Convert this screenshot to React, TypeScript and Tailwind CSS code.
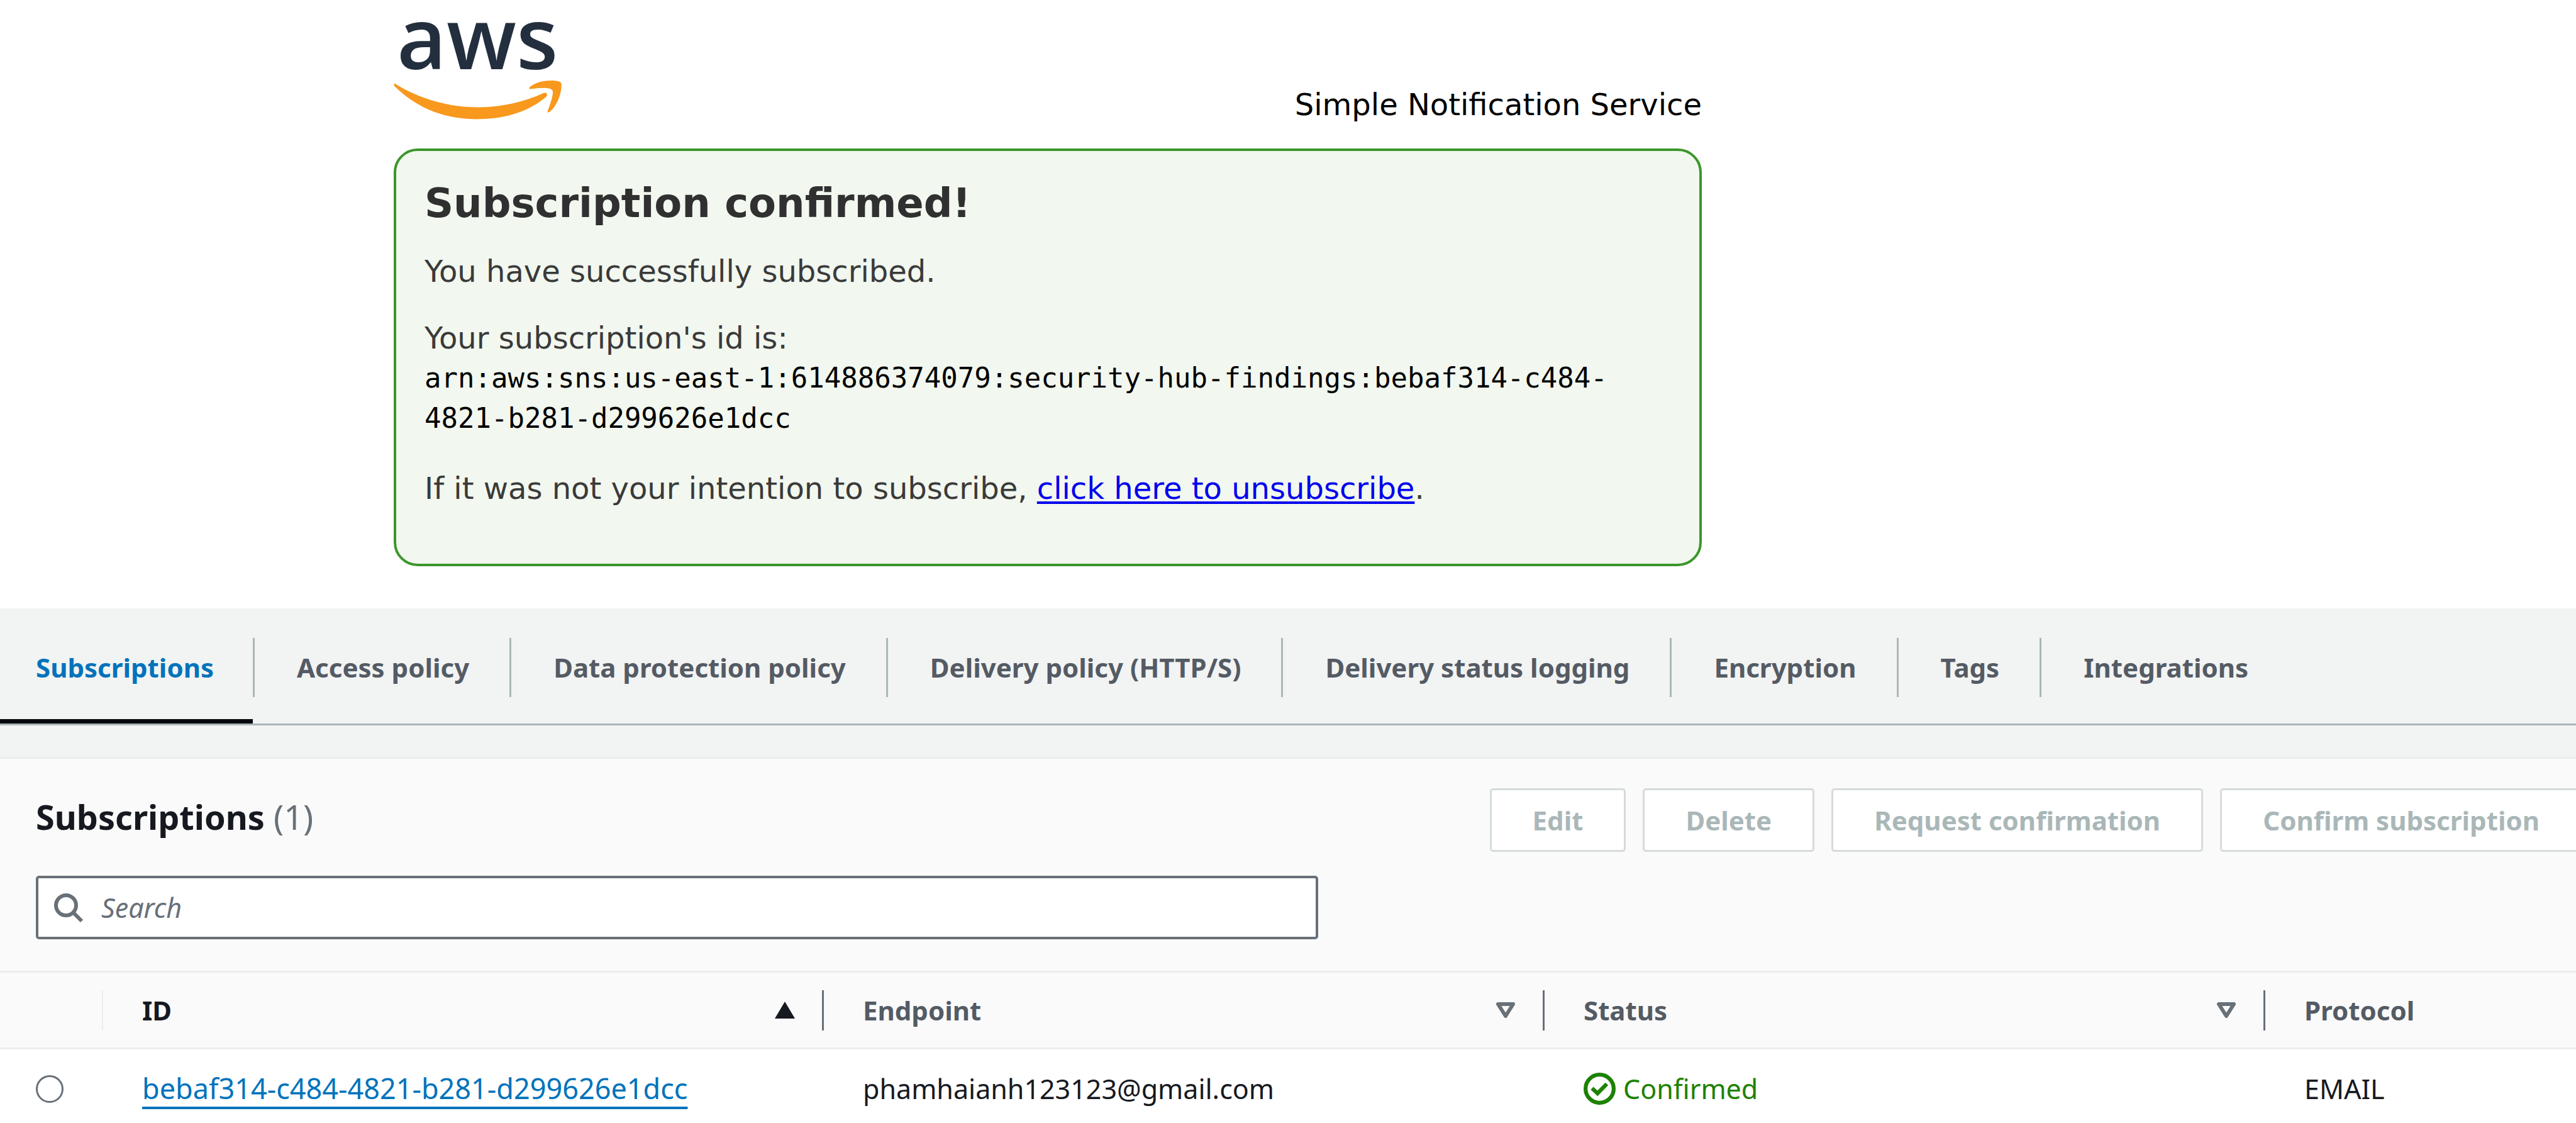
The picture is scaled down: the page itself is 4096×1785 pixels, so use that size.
import React, { useState } from "react";

const TABS = [
  "Subscriptions",
  "Access policy",
  "Data protection policy",
  "Delivery policy (HTTP/S)",
  "Delivery status logging",
  "Encryption",
  "Tags",
  "Integrations",
];

const ACTIONS = ["Edit", "Delete", "Request confirmation", "Confirm subscription"];

function AwsLogo() {
  return (
    <svg role="img" aria-label="aws" viewBox="0 0 858 550" className="mb-2 h-[171px] w-[267px] overflow-visible">
      <text x="16" y="293" fontSize="438" className="fill-[#232f3e] font-['Open_Sans',sans-serif] font-semibold">
        aws
      </text>
      <g transform="translate(-63 -30)" fill="#f8981d">
        <path d="M65 394 C200 478 350 517 495 517 C620 517 730 490 828 445 Q853 438 845 462 C760 535 640 578 495 578 C330 578 190 530 65 408 Z" />
        <path d="M757 415 C790 385 850 378 885 381 C905 383 918 387 920 396 C924 440 900 510 860 541 Q847 548 850 537 C862 505 882 450 875 432 C868 412 800 418 762 424 Q752 422 757 415 Z" />
      </g>
    </svg>
  );
}

function SearchIcon() {
  return (
    <svg viewBox="0 0 48 48" fill="none" stroke="#687078" strokeWidth="6" aria-hidden="true" className="size-12 shrink-0">
      <circle cx="20" cy="20" r="16" />
      <path d="M31 31 L45 45" />
    </svg>
  );
}

function CheckIcon() {
  return (
    <svg viewBox="0 0 163 163" fill="none" stroke="#1d8102" aria-hidden="true" className="size-[51px] shrink-0">
      <circle cx="81.5" cy="81.5" r="71.5" strokeWidth="20" />
      <path d="M43 79 L71 105 L118 57" strokeWidth="20" />
    </svg>
  );
}

function SortIcon({ active }: { active: boolean }) {
  return active ? (
    <svg viewBox="0 0 32 28" aria-hidden="true" className="h-7 w-8">
      <path d="M16 0 L32 27 H0 Z" fill="#16191f" />
    </svg>
  ) : (
    <svg viewBox="0 0 32 28" aria-hidden="true" className="h-7 w-8">
      <path d="M4 4 H28 L16 23 Z" fill="none" stroke="#687078" strokeWidth="6" strokeLinejoin="round" />
    </svg>
  );
}

function Confirmation() {
  return (
    <section className="ml-[626px] mb-[67px] w-[2080px] font-['DejaVu_Sans',sans-serif] text-[48px] leading-[64px]">
      <header className="flex items-end justify-between pt-[19px]">
        <AwsLogo />
        <p className="text-black">Simple Notification Service</p>
      </header>
      <div className="mt-[38px] rounded-[38px] border-4 border-[#3c962b] bg-[#f2f7ef] px-[45px] pt-[43px] pb-[88px] text-[#3a3a3a]">
        <h1 className="text-[64px] leading-[80px] font-bold text-[#303030]">Subscription confirmed!</h1>
        <p className="mt-9">You have successfully subscribed.</p>
        <p className="mt-[42px]">Your subscription&apos;s id is:</p>
        <p className="font-['DejaVu_Sans_Mono',monospace] text-[44px] leading-[64px] text-black">
          arn:aws:sns:us-east-1:614886374079:security-hub-findings:bebaf314-c484-
          <br />
          4821-b281-d299626e1dcc
        </p>
        <p className="mt-[47px]">
          If it was not your intention to subscribe,{" "}
          <a href="#unsubscribe" className="text-[#0000ee] underline decoration-4 underline-offset-4">
            click here to unsubscribe
          </a>
          .
        </p>
      </div>
    </section>
  );
}

function Tabs() {
  const [current, setCurrent] = useState(TABS[0]);
  return (
    <nav role="tablist" className="flex border-b-3 border-[#aab7b8] pt-[47px] text-[42px]">
      {TABS.map((tab, i) => {
        const on = tab === current;
        return (
          <button
            key={tab}
            type="button"
            role="tab"
            aria-selected={on}
            onClick={() => setCurrent(tab)}
            className={`flex flex-col gap-[35px] font-bold whitespace-nowrap ${on ? "text-[#0073bb]" : "text-[#545b64]"}`}
          >
            <span
              className={`flex h-[94px] items-center border-r-3 ${i === 0 ? "pr-[62px] pl-[57px]" : "pr-16 pl-[67px]"} ${
                i === TABS.length - 1 ? "border-transparent" : "border-[#aab7b8]"
              }`}
            >
              {tab}
            </span>
            <span className={`mr-[3px] h-[7px] self-stretch ${on ? "bg-[#05080d]" : "bg-transparent"}`} />
          </button>
        );
      })}
    </nav>
  );
}

function HeaderCell({ label, sorted }: { label: string; sorted: boolean }) {
  return (
    <th scope="col" aria-sort={sorted ? "ascending" : "none"} className="p-0 font-bold">
      <button
        type="button"
        className={`flex h-16 w-full items-center justify-between border-r-3 border-[#687078] pr-[43px] pl-[62px] ${
          sorted ? "text-[#16191f]" : "text-[#545b64]"
        }`}
      >
        {label}
        <SortIcon active={sorted} />
      </button>
    </th>
  );
}

function SubscriptionsTable() {
  return (
    <table className="mt-[50px] w-full table-fixed border-t-3 border-[#eaeded] text-left">
      <colgroup>
        <col className="w-[164px]" />
        <col className="w-[1146px]" />
        <col className="w-[1146px]" />
        <col className="w-[1146px]" />
        <col />
      </colgroup>
      <thead className="text-[42px]">
        <tr className="h-[122px] border-b-3 border-[#eaeded]">
          <td className="p-0">
            <div className="h-16 border-r-2 border-[#eaeded]" />
          </td>
          <HeaderCell label="ID" sorted />
          <HeaderCell label="Endpoint" sorted={false} />
          <HeaderCell label="Status" sorted={false} />
          <th scope="col" className="p-0 pl-[62px] font-bold text-[#545b64]">
            Protocol
          </th>
        </tr>
      </thead>
      <tbody>
        <tr className="h-[117px] bg-white text-[#16191f]">
          <td className="p-0 pt-[10px] pl-[57px]">
            <input
              type="radio"
              name="subscription"
              aria-label="Select bebaf314-c484-4821-b281-d299626e1dcc"
              className="block size-[44px] appearance-none rounded-full border-3 border-[#687078] bg-white"
            />
          </td>
          <td className="p-0 pt-[10px] pl-[62px]">
            <a
              href="#subscription"
              className="text-[45px] text-[#0073bb] underline decoration-4 underline-offset-[12px] [text-decoration-skip-ink:none]"
            >
              bebaf314-c484-4821-b281-d299626e1dcc
            </a>
          </td>
          <td className="p-0 pt-[10px] pl-[62px]">phamhaianh123123@gmail.com</td>
          <td className="p-0 pt-[10px] pl-[62px]">
            <span className="flex items-center gap-3 text-[#1d8102]">
              <CheckIcon />
              Confirmed
            </span>
          </td>
          <td className="p-0 pt-[10px] pl-[62px]">EMAIL</td>
        </tr>
      </tbody>
    </table>
  );
}

function SubscriptionsPanel() {
  return (
    <section className="mt-[50px] overflow-hidden border-t-3 border-[#eaeded] bg-[#fafafa] pt-[47px]">
      <div className="-mr-[10px] flex items-center justify-between pl-[57px]">
        <h2 className="pb-3 text-[54px] leading-[64px] font-bold text-[#16191f]">
          Subscriptions <span className="font-normal text-[#687078]">(1)</span>
        </h2>
        <div className="flex gap-[27px]">
          {ACTIONS.map((action) => (
            <button
              key={action}
              type="button"
              disabled
              className="h-[101px] rounded-[5px] border-3 border-[#d5dbdb] bg-white px-[65px] text-[42px] font-bold whitespace-nowrap text-[#aab7b8]"
            >
              {action}
            </button>
          ))}
        </div>
      </div>
      <label className="mt-[38px] ml-[57px] flex h-[101px] w-[2039px] items-center gap-7 rounded-[5px] border-4 border-[#687078] bg-white pl-6">
        <SearchIcon />
        <input
          type="search"
          aria-label="Search"
          placeholder="Search"
          className="w-full bg-transparent outline-none placeholder:text-[#687078] placeholder:italic"
        />
      </label>
      <SubscriptionsTable />
    </section>
  );
}

export default function App() {
  return (
    <main className="flex min-h-screen flex-col bg-white">
      <Confirmation />
      <div className="bg-[#f2f3f3] font-['Noto_Sans',sans-serif] text-[43px] leading-[60px]">
        <Tabs />
        <SubscriptionsPanel />
      </div>
    </main>
  );
}
